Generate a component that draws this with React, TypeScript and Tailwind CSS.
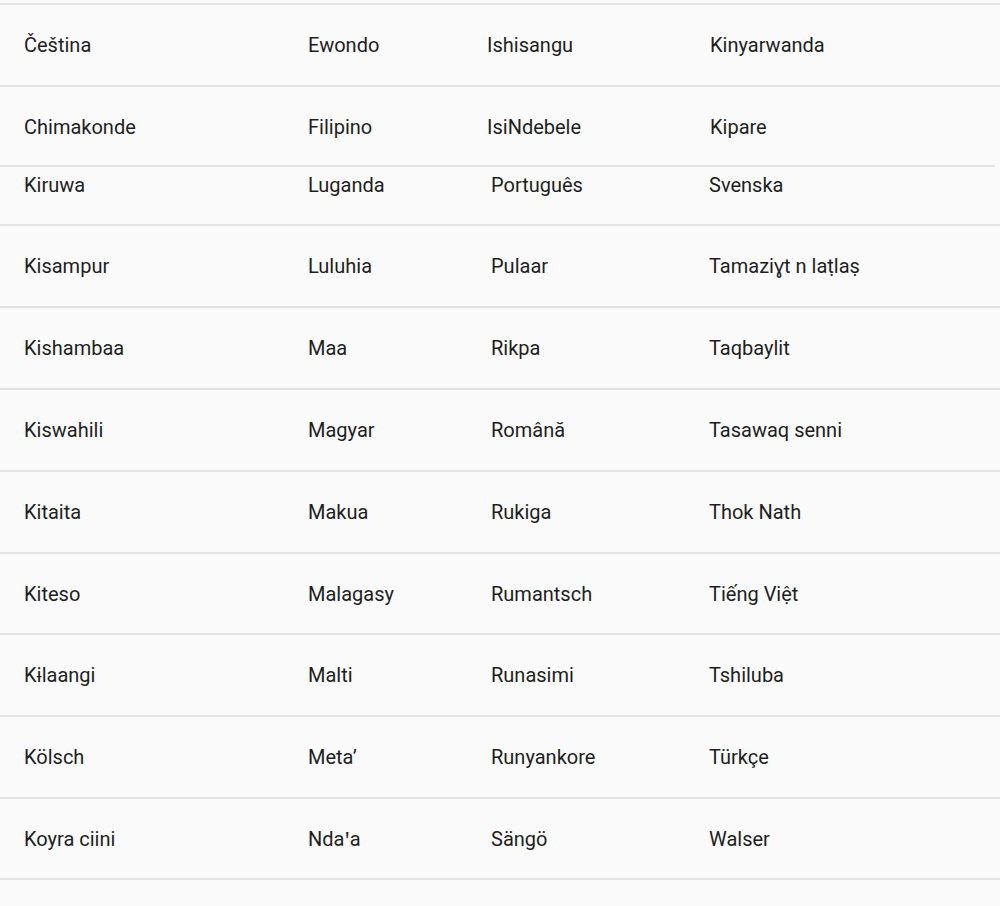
import React from "react";

const top: string[][] = [
  ["Čeština", "Ewondo", "Ishisangu", "Kinyarwanda"],
  ["Chimakonde", "Filipino", "IsiNdebele", "Kipare"],
];

const rows: { cells: string[]; h: string }[] = [
  { cells: ["Kisampur", "Luluhia", "Pulaar", "Tamaziɣt n laṭlaṣ"], h: "h-[82px]" },
  { cells: ["Kishambaa", "Maa", "Rikpa", "Taqbaylit"], h: "h-[82px]" },
  { cells: ["Kiswahili", "Magyar", "Română", "Tasawaq senni"], h: "h-[82px]" },
  { cells: ["Kitaita", "Makua", "Rukiga", "Thok Nath"], h: "h-[82px]" },
  { cells: ["Kiteso", "Malagasy", "Rumantsch", "Tiếng Việt"], h: "h-[81px]" },
  { cells: ["Kɨlaangi", "Malti", "Runasimi", "Tshiluba"], h: "h-[82px]" },
  { cells: ["Kölsch", "Meta’", "Runyankore", "Türkçe"], h: "h-[82px]" },
  { cells: ["Koyra ciini", "Ndaꞌa", "Sängö", "Walser"], h: "h-[81px]" },
];

export default function App() {
  return (
    <div
      className="h-[906px] w-[1000px] overflow-hidden bg-[#fafafa] text-[20px] leading-[24px] text-[#1e1e1e]"
      style={{ fontFamily: "Roboto, 'Noto Sans', sans-serif" }}
    >
      <div className="h-[3px]" />
      <div className="border-t-2 border-[#e3e3e3]" />
      <div className="grid h-[82px] grid-cols-[284px_179px_223px_1fr] items-center border-b-2 border-[#e3e3e3] pl-[24px]">
        {top[0].map((c) => (
          <div key={c}>{c}</div>
        ))}
      </div>
      <div className="mr-[5px] grid h-[80px] grid-cols-[284px_179px_223px_1fr] items-center border-b-2 border-[#e3e3e3] pl-[24px] pt-[2px]">
        {top[1].map((c) => (
          <div key={c}>{c}</div>
        ))}
      </div>
      <div className="grid h-[59px] grid-cols-[284px_183px_218px_1fr] items-start border-b-2 border-[#e3e3e3] pl-[24px] pt-[6px]">
        {["Kiruwa", "Luganda", "Português", "Svenska"].map((c) => (
          <div key={c}>{c}</div>
        ))}
      </div>
      {rows.map((r, i) => (
        <div
          key={i}
          className={`grid ${r.h} grid-cols-[284px_183px_218px_1fr] items-center border-b-2 border-[#e3e3e3] pl-[24px]`}
        >
          {r.cells.map((c) => (
            <div key={c}>{c}</div>
          ))}
        </div>
      ))}
    </div>
  );
}
